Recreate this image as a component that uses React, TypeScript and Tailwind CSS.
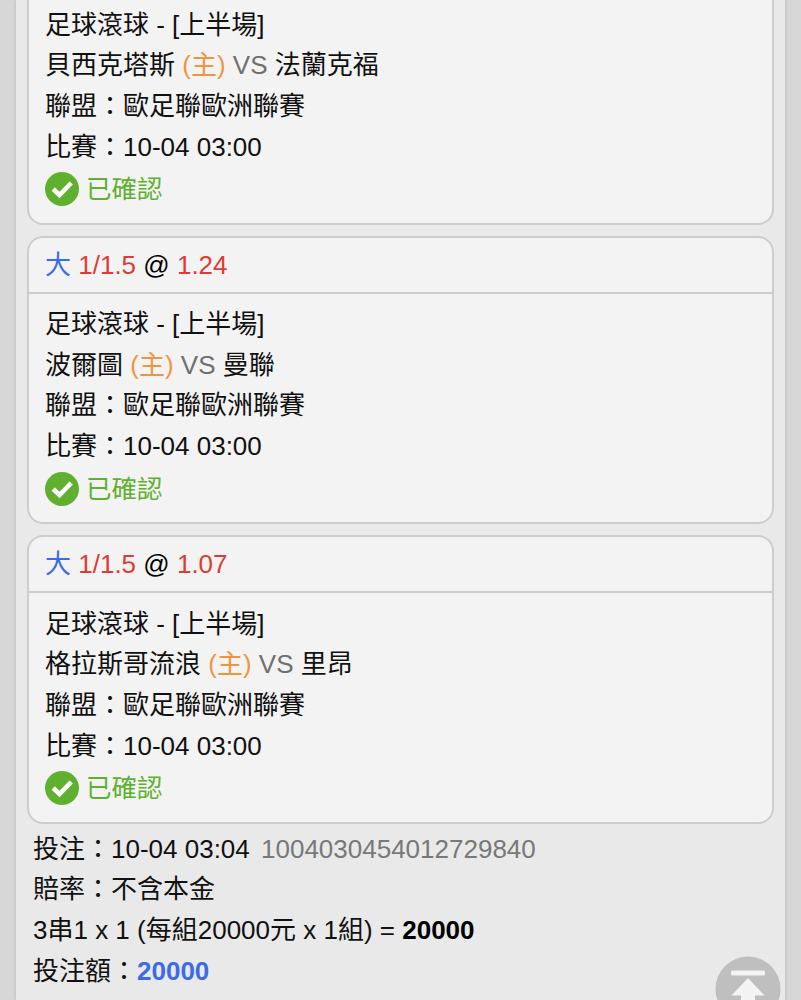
interface Bet {
  odds?: string
  home: string
  away: string
}

const bets: Bet[] = [
  { home: '貝西克塔斯', away: '法蘭克福' },
  { odds: '1.24', home: '波爾圖', away: '曼聯' },
  { odds: '1.07', home: '格拉斯哥流浪', away: '里昂' },
]

function CheckIcon() {
  return (
    <svg viewBox="0 0 34 34" className="h-[34px] w-[34px]">
      <circle cx="17" cy="17" r="17" fill="#60b030" />
      <path d="M8.2 17L14.5 23L26.2 11" fill="none" stroke="#fff" strokeWidth="4.6" />
    </svg>
  )
}

function BetCard({ bet }: { bet: Bet }) {
  return (
    <div className="h-[288.5px] shrink-0 rounded-[16px] border-2 border-[#cdcdcd] bg-[#f3f3f3]">
      <div className="h-[56px] border-b-2 border-[#cdcdcd] pl-4 leading-[55px] text-black">
        {bet.odds && (
          <>
            <span className="text-[#3b6be8]">大</span> <span className="text-[#dc3c34]">1/1.5</span> @{' '}
            <span className="text-[#dc3c34]">{bet.odds}</span>
          </>
        )}
      </div>
      <div className="pt-[10.5px] pl-4">
        <div>足球滾球 - [上半場]</div>
        <div>
          {bet.home} <span className="text-[#f0953f]">(主)</span> <span className="text-[#707070]">VS</span> {bet.away}
        </div>
        <div>聯盟：歐足聯歐洲聯賽</div>
        <div>比賽：10-04 03:00</div>
        <div className="flex h-[44px] items-center gap-[7px] text-[#60b030]">
          <CheckIcon />
          <span className="pt-px text-[25.5px]">已確認</span>
        </div>
      </div>
    </div>
  )
}

export default function App() {
  return (
    <div className="relative flex h-[1000px] w-[801px] justify-center overflow-hidden bg-[#d7d7d7] font-['Liberation_Sans','Noto_Sans_CJK_TC',sans-serif] text-[26px] leading-[40.67px] whitespace-nowrap text-[#111]">
      <div className="h-full w-[769px] overflow-hidden bg-[#e9e9e9] px-[11px] shadow-[0_0_4px_rgba(0,0,0,0.15)]">
        <div className="-mt-[64px] flex flex-col gap-[11px]">
          {bets.map((bet) => (
            <BetCard key={bet.home} bet={bet} />
          ))}
        </div>
        <div className="pt-[5px] pl-[6px]">
          <div>
            投注：10-04 03:04 <span className="ml-[4px] text-[#787878]">1004030454012729840</span>
          </div>
          <div>賠率：不含本金</div>
          <div>
            3串1 x 1 (每組20000元 x 1組) = <b className="text-black">20000</b>
          </div>
          <div>
            投注額：<b className="text-[#3b6be8]">20000</b>
          </div>
        </div>
      </div>
      <button className="absolute top-[956px] left-[715px]">
        <svg viewBox="0 0 66 66" className="h-[66px] w-[66px]">
          <circle cx="33" cy="33" r="32.5" fill="#bfbfbf" />
          <rect x="16" y="14.5" width="34" height="5" rx="1.5" fill="#f3f3f3" />
          <path d="M33 22L49.5 39.5H40V52H26V39.5H16.5Z" fill="#f3f3f3" />
        </svg>
      </button>
    </div>
  )
}
